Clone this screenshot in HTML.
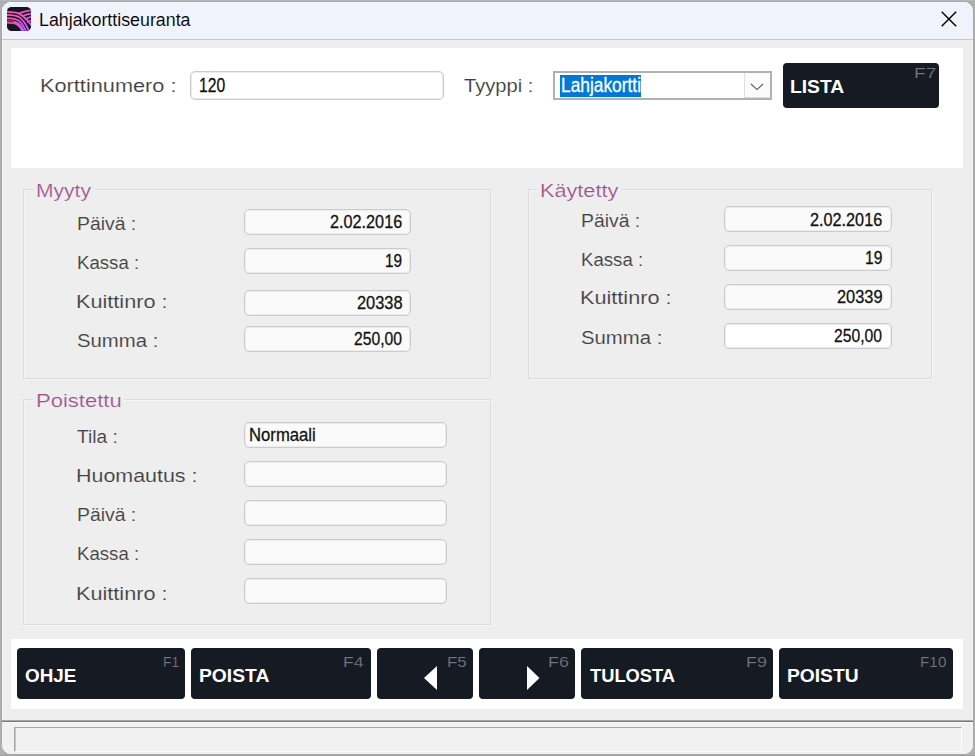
<!DOCTYPE html>
<html><head><meta charset="utf-8">
<style>
*{margin:0;padding:0;box-sizing:border-box}
html,body{width:975px;height:756px;overflow:hidden;background:#afafaf;font-family:"Liberation Sans",sans-serif}
.abs{position:absolute}
.tx{position:absolute;white-space:nowrap;transform-origin:0 0}
#win{position:absolute;left:1px;top:1px;width:973px;height:754px;border-radius:10px;background:#eeeeee;overflow:hidden;border:1px solid #a8a8a8;box-shadow:inset 1px 1px 0 #f6f6f6,inset -1px -1px 0 #f4f4f4}
#title{position:absolute;left:0;top:0;width:100%;height:38px;background:#f0f3fb;border-bottom:1px solid #c8c9cb;box-shadow:inset 1px 1px 0 #f5f7fc}
.panel{position:absolute;background:#fff}
.grp{position:absolute;border:1px solid #dcdcdc;box-shadow:1px 1px 0 #f4f4f4,inset 1px 1px 0 #f4f4f4}
.gap{position:absolute;height:3px;background:#eeeeee}
.fld{position:absolute;height:26px;border:1px solid #cccccc;border-radius:5px;background:#fafafa;box-shadow:inset 0 0 0 1px #ececec}
.btn{position:absolute;background:#161a22;border-radius:4px}
</style></head><body>
<div id="win">
  <div id="title">
    <svg class="abs" style="left:5px;top:5px" width="24" height="24" viewBox="0 0 24 24">
      <defs>
        <linearGradient id="g" x1="0" y1="0.3" x2="1" y2="0.8"><stop offset="0" stop-color="#ff52a8"/><stop offset="0.55" stop-color="#e055d8"/><stop offset="1" stop-color="#c05cff"/></linearGradient>
        <clipPath id="c"><rect x="0" y="0" width="24" height="24" rx="4.5"/></clipPath>
      </defs>
      <rect x="0" y="0" width="24" height="24" rx="4.5" fill="#15171e"/>
      <g clip-path="url(#c)" stroke="url(#g)" fill="none">
        <path stroke-width="1.8" d="M-1 4.8 C5 4.8 9 5.2 12 6.6 C16 8.6 20 12.5 25 19"/>
        <path stroke-width="1.8" d="M-1 7.9 C5 7.9 9 8.5 12 10.1 C15.5 12.2 18.5 16 22.5 25"/>
        <path stroke-width="1.8" d="M-1 11.1 C5 11.1 8.5 11.7 11.5 13.6 C14.5 15.7 17 19.5 19.5 25"/>
        <path stroke-width="3.1" d="M-1 14.9 C4 14.8 8 15.3 10.5 16.9 C13 18.6 15 21.5 16.5 25"/>
        <path stroke-width="1.8" d="M11.5 6.5 C15 5 19 3.9 25 3.2"/>
        <path stroke-width="1.7" d="M15 9.3 C18 7.9 21 6.9 25 6.4"/>
        <path stroke-width="1.7" d="M17.8 12.4 C20.3 11.1 22.5 10.2 25 9.7"/>
        <path stroke-width="1.6" d="M20.3 15.4 C22 14.3 23.5 13.6 25 13.2"/>
      </g>
      <path d="M-1 14.5 C3 14.5 5 14.7 7 15.2" stroke="#15171e" stroke-width="0.8" fill="none" clip-path="url(#c)"/>
    </svg>
    <svg class="abs" style="left:938.5px;top:9px" width="16" height="16" viewBox="0 0 16 16"><path d="M0.7 0.7 L15.2 15.2 M15.2 0.7 L0.7 15.2" stroke="#000" stroke-width="1.45"/></svg>
  </div>
</div>

<!-- top panel -->
<div class="panel" style="left:11px;top:48px;width:952px;height:120px"></div>
<div class="fld" style="left:190px;top:71px;width:254px;height:29px;background:#fff;border-color:#cccccc"></div>
<div class="abs" style="left:553px;top:71px;width:219px;height:29px;border:2px solid #b0b1b6;background:#fff">
  <div class="abs" style="left:5px;top:2px;width:81px;height:22px;background:#0078d7"></div>
  <div class="abs" style="left:189px;top:0;width:26px;height:25px;background:#fbfbfb;border-left:1px solid #dedede;border-bottom:1px solid #dedede"></div>
  <svg class="abs" style="left:195px;top:10px" width="14" height="8" viewBox="0 0 14 8"><path d="M1 1 L7 6.6 L13 1" stroke="#5a5a5a" stroke-width="1.1" fill="none"/></svg>
</div>
<div class="btn" style="left:783px;top:63px;width:156px;height:45px"></div>

<!-- Myyty -->
<div class="grp" style="left:23px;top:189px;width:468px;height:190px"></div>
<div class="gap" style="left:33px;top:188px;width:62px"></div>
<div class="fld" style="left:244px;top:209px;width:167px"></div>
<div class="fld" style="left:244px;top:248px;width:167px"></div>
<div class="fld" style="left:244px;top:290px;width:167px"></div>
<div class="fld" style="left:244px;top:326px;width:167px"></div>

<!-- Kaytetty -->
<div class="grp" style="left:528px;top:189px;width:404px;height:190px"></div>
<div class="gap" style="left:537px;top:188px;width:85px"></div>
<div class="fld" style="left:724px;top:206px;width:168px"></div>
<div class="fld" style="left:724px;top:245px;width:168px"></div>
<div class="fld" style="left:724px;top:284px;width:168px"></div>
<div class="fld" style="left:724px;top:323px;width:168px;background:#fff"></div>

<!-- Poistettu -->
<div class="grp" style="left:23px;top:399px;width:468px;height:226px"></div>
<div class="gap" style="left:33px;top:398px;width:91px"></div>
<div class="fld" style="left:244px;top:422px;width:203px"></div>
<div class="fld" style="left:244px;top:461px;width:203px"></div>
<div class="fld" style="left:244px;top:500px;width:203px"></div>
<div class="fld" style="left:244px;top:539px;width:203px"></div>
<div class="fld" style="left:244px;top:578px;width:203px"></div>

<!-- bottom panel -->
<div class="panel" style="left:11px;top:639px;width:952px;height:70px"></div>
<div class="btn" style="left:17px;top:648px;width:168px;height:51px"></div>
<div class="btn" style="left:191px;top:648px;width:180px;height:51px"></div>
<div class="btn" style="left:377px;top:648px;width:96px;height:51px">
  <svg class="abs" style="left:47px;top:18px" width="13" height="24" viewBox="0 0 13 24"><path d="M0 12 L13 0 L13 24 Z" fill="#fff"/></svg>
</div>
<div class="btn" style="left:479px;top:648px;width:96px;height:51px">
  <svg class="abs" style="left:48px;top:18px" width="13" height="24" viewBox="0 0 13 24"><path d="M0 0 L12.5 12 L0 24 Z" fill="#fff"/></svg>
</div>
<div class="btn" style="left:581px;top:648px;width:192px;height:51px"></div>
<div class="btn" style="left:779px;top:648px;width:174px;height:51px"></div>

<!-- status -->
<div class="abs" style="left:2px;top:720px;width:971px;height:1px;background:#a8a8a8"></div>
<div class="abs" style="left:2px;top:721px;width:971px;height:1px;background:#7a7a7a"></div>
<div class="abs" style="left:2px;top:722px;width:971px;height:1px;background:#f8f8f8"></div>
<div class="abs" style="left:2px;top:723px;width:971px;height:31px;background:#f1f1f1;border-radius:0 0 9px 9px"></div>
<div class="abs" style="left:14px;top:727px;width:948px;height:25px;border-top:1px solid #a8a8a8;border-left:1px solid #a8a8a8;border-right:1px solid #fcfcfc;border-bottom:1px solid #fcfcfc;background:#f0f0f0;box-shadow:inset 1px 0 0 #c4c4c4"></div>
<div class="abs" style="left:0;top:0;width:975px;height:1px;background:#b4b7bb"></div>
<div class="abs" style="left:0;top:755px;width:975px;height:1px;background:#a0a0a0"></div>

<div class="tx" style="left:39.01px;top:11px;font-size:18px;line-height:18px;font-weight:normal;color:#000;transform:scaleX(0.9896);-webkit-text-stroke:0.1px #f0f3fb">Lahjakorttiseuranta</div>
<div class="tx" style="left:39.78px;top:77px;font-size:18px;line-height:18px;font-weight:normal;color:#404040;transform:scaleX(1.2073);-webkit-text-stroke:0.12px #ffffff">Korttinumero :</div>
<div class="tx" style="left:463.88px;top:77px;font-size:18px;line-height:18px;font-weight:normal;color:#404040;transform:scaleX(1.1167);-webkit-text-stroke:0.12px #ffffff">Tyyppi :</div>
<div class="tx" style="left:199.26px;top:75px;font-size:20px;line-height:20px;font-weight:normal;color:#111;transform:scaleX(0.7827);-webkit-text-stroke:0.3px #111">120</div>
<div class="tx" style="left:561.10px;top:75px;font-size:20px;line-height:20px;font-weight:normal;color:#fff;transform:scaleX(0.8670);-webkit-text-stroke:0.3px #fff">Lahjakortti</div>
<div class="tx" style="left:789.93px;top:78px;font-size:18px;line-height:18px;font-weight:bold;color:#fff;transform:scaleX(1.0692);">LISTA</div>
<div class="tx" style="left:913.69px;top:65px;font-size:15px;line-height:15px;font-weight:normal;color:#74767c;transform:scaleX(1.2763);-webkit-text-stroke:0.15px #161a22">F7</div>
<div class="tx" style="left:35.88px;top:182px;font-size:18px;line-height:18px;font-weight:normal;color:#9c4e8c;transform:scaleX(1.1681);-webkit-text-stroke:0.2px #eeeeee">Myyty</div>
<div class="tx" style="left:76.89px;top:215px;font-size:18px;line-height:18px;font-weight:normal;color:#404040;transform:scaleX(1.0768);-webkit-text-stroke:0.12px #eeeeee">Päivä :</div>
<div class="tx" style="left:76.97px;top:254px;font-size:18px;line-height:18px;font-weight:normal;color:#404040;transform:scaleX(1.0345);-webkit-text-stroke:0.12px #eeeeee">Kassa :</div>
<div class="tx" style="left:75.79px;top:293px;font-size:18px;line-height:18px;font-weight:normal;color:#404040;transform:scaleX(1.2029);-webkit-text-stroke:0.12px #eeeeee">Kuittinro :</div>
<div class="tx" style="left:76.87px;top:332px;font-size:18px;line-height:18px;font-weight:normal;color:#404040;transform:scaleX(1.1286);-webkit-text-stroke:0.12px #eeeeee">Summa :</div>
<div class="tx" style="left:330.13px;top:212px;font-size:19px;line-height:19px;font-weight:normal;color:#111;transform:scaleX(0.8540);-webkit-text-stroke:0.3px #111">2.02.2016</div>
<div class="tx" style="left:384.73px;top:251px;font-size:19px;line-height:19px;font-weight:normal;color:#111;transform:scaleX(0.8063);-webkit-text-stroke:0.3px #111">19</div>
<div class="tx" style="left:357.11px;top:293px;font-size:19px;line-height:19px;font-weight:normal;color:#111;transform:scaleX(0.8632);-webkit-text-stroke:0.3px #111">20338</div>
<div class="tx" style="left:354.15px;top:329px;font-size:19px;line-height:19px;font-weight:normal;color:#111;transform:scaleX(0.8249);-webkit-text-stroke:0.3px #111">250,00</div>
<div class="tx" style="left:539.85px;top:182px;font-size:18px;line-height:18px;font-weight:normal;color:#9c4e8c;transform:scaleX(1.2035);-webkit-text-stroke:0.2px #eeeeee">Käytetty</div>
<div class="tx" style="left:580.89px;top:212px;font-size:18px;line-height:18px;font-weight:normal;color:#404040;transform:scaleX(1.0768);-webkit-text-stroke:0.12px #eeeeee">Päivä :</div>
<div class="tx" style="left:580.97px;top:251px;font-size:18px;line-height:18px;font-weight:normal;color:#404040;transform:scaleX(1.0345);-webkit-text-stroke:0.12px #eeeeee">Kassa :</div>
<div class="tx" style="left:579.79px;top:289px;font-size:18px;line-height:18px;font-weight:normal;color:#404040;transform:scaleX(1.2029);-webkit-text-stroke:0.12px #eeeeee">Kuittinro :</div>
<div class="tx" style="left:580.87px;top:329px;font-size:18px;line-height:18px;font-weight:normal;color:#404040;transform:scaleX(1.1286);-webkit-text-stroke:0.12px #eeeeee">Summa :</div>
<div class="tx" style="left:810.13px;top:210px;font-size:19px;line-height:19px;font-weight:normal;color:#111;transform:scaleX(0.8540);-webkit-text-stroke:0.3px #111">2.02.2016</div>
<div class="tx" style="left:864.68px;top:248px;font-size:19px;line-height:19px;font-weight:normal;color:#111;transform:scaleX(0.8237);-webkit-text-stroke:0.3px #111">19</div>
<div class="tx" style="left:837.11px;top:287px;font-size:19px;line-height:19px;font-weight:normal;color:#111;transform:scaleX(0.8632);-webkit-text-stroke:0.3px #111">20339</div>
<div class="tx" style="left:834.15px;top:326px;font-size:19px;line-height:19px;font-weight:normal;color:#111;transform:scaleX(0.8249);-webkit-text-stroke:0.3px #111">250,00</div>
<div class="tx" style="left:35.82px;top:392px;font-size:18px;line-height:18px;font-weight:normal;color:#9c4e8c;transform:scaleX(1.2225);-webkit-text-stroke:0.2px #eeeeee">Poistettu</div>
<div class="tx" style="left:76.70px;top:428px;font-size:18px;line-height:18px;font-weight:normal;color:#404040;transform:scaleX(1.0622);-webkit-text-stroke:0.12px #eeeeee">Tila :</div>
<div class="tx" style="left:75.79px;top:467px;font-size:18px;line-height:18px;font-weight:normal;color:#404040;transform:scaleX(1.1902);-webkit-text-stroke:0.12px #eeeeee">Huomautus :</div>
<div class="tx" style="left:76.89px;top:506px;font-size:18px;line-height:18px;font-weight:normal;color:#404040;transform:scaleX(1.0768);-webkit-text-stroke:0.12px #eeeeee">Päivä :</div>
<div class="tx" style="left:76.97px;top:545px;font-size:18px;line-height:18px;font-weight:normal;color:#404040;transform:scaleX(1.0345);-webkit-text-stroke:0.12px #eeeeee">Kassa :</div>
<div class="tx" style="left:75.79px;top:585px;font-size:18px;line-height:18px;font-weight:normal;color:#404040;transform:scaleX(1.2029);-webkit-text-stroke:0.12px #eeeeee">Kuittinro :</div>
<div class="tx" style="left:249.12px;top:425px;font-size:19px;line-height:19px;font-weight:normal;color:#111;transform:scaleX(0.8784);-webkit-text-stroke:0.3px #111">Normaali</div>
<div class="tx" style="left:25.00px;top:667px;font-size:18px;line-height:18px;font-weight:bold;color:#fff;transform:scaleX(1.0471);">OHJE</div>
<div class="tx" style="left:198.93px;top:667px;font-size:18px;line-height:18px;font-weight:bold;color:#fff;transform:scaleX(1.0715);">POISTA</div>
<div class="tx" style="left:590.00px;top:667px;font-size:18px;line-height:18px;font-weight:bold;color:#fff;transform:scaleX(1.0164);">TULOSTA</div>
<div class="tx" style="left:786.93px;top:667px;font-size:18px;line-height:18px;font-weight:bold;color:#fff;transform:scaleX(1.0680);">POISTU</div>
<div class="tx" style="left:163.14px;top:654px;font-size:15px;line-height:15px;font-weight:normal;color:#74767c;transform:scaleX(0.9295);-webkit-text-stroke:0.15px #161a22">F1</div>
<div class="tx" style="left:342.86px;top:654px;font-size:15px;line-height:15px;font-weight:normal;color:#74767c;transform:scaleX(1.1705);-webkit-text-stroke:0.15px #161a22">F4</div>
<div class="tx" style="left:446.96px;top:654px;font-size:15px;line-height:15px;font-weight:normal;color:#74767c;transform:scaleX(1.1237);-webkit-text-stroke:0.15px #161a22">F5</div>
<div class="tx" style="left:547.89px;top:654px;font-size:15px;line-height:15px;font-weight:normal;color:#74767c;transform:scaleX(1.1905);-webkit-text-stroke:0.15px #161a22">F6</div>
<div class="tx" style="left:745.83px;top:654px;font-size:15px;line-height:15px;font-weight:normal;color:#74767c;transform:scaleX(1.1975);-webkit-text-stroke:0.15px #161a22">F9</div>
<div class="tx" style="left:920.05px;top:654px;font-size:15px;line-height:15px;font-weight:normal;color:#74767c;transform:scaleX(1.0228);-webkit-text-stroke:0.15px #161a22">F10</div>
</body></html>
